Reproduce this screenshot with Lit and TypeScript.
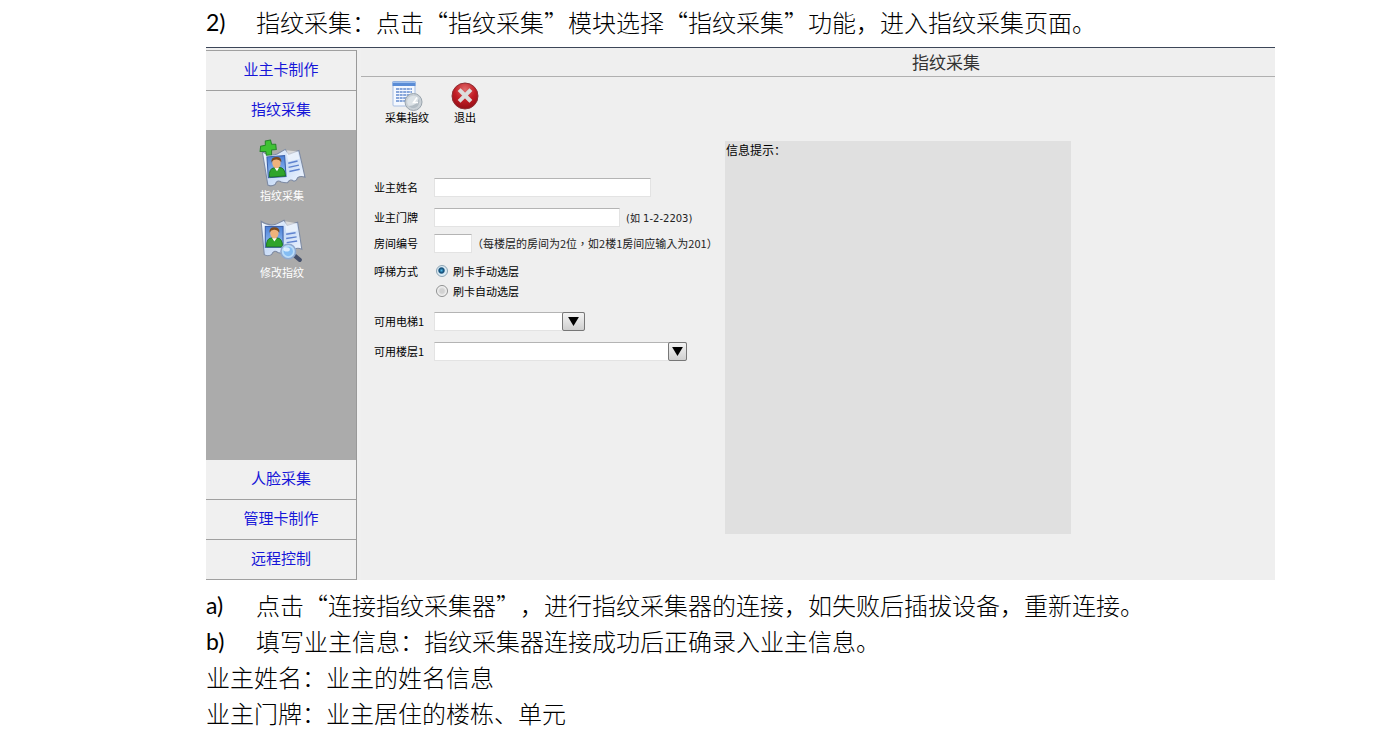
import { LitElement, html, css, svg } from "lit";
import { customElement, state } from "lit/decorators.js";
import { classMap } from "lit/directives/class-map.js";

const badge = svg`
  <path d="M3 11 Q10 16 17 14 L25 10 L28 15 L38 12 Q40 24 42 38 Q38 36 35 38 Q34 41 31 41 Q28 38 25 42 Q22 42 19 41 Q15 38 13 43 Q9 45 6 43 Z"
    fill="url(#card)" stroke="#7d8aa3" stroke-width="1"/>
  <path d="M26 11 L37 13 L38 20 L27 22 Z" fill="#fff" opacity=".55"/>
  <rect x="7" y="16" width="17" height="20" fill="url(#photo)" stroke="#3a5fa8" stroke-width="1"/>
  <path d="M8 35.500 Q8 27 13 27 H18 Q23.500 27 23.500 35.500 Z" fill="#2fa42b" stroke="#156b17" stroke-width=".8"/>
  <path d="M13.500 27 L15.700 30.500 L18 27 Z" fill="#fff"/>
  <ellipse cx="15.700" cy="22.500" rx="4" ry="5" fill="#efb27b"/>
  <path d="M11 22 Q10.500 16.500 15.700 16.700 Q21 16.500 20.500 22 Q18.500 19 15.700 19.200 Q12.500 19 11 22 Z" fill="#7b4a1e"/>
  <path d="M27 23.500 L36 22 M27 27.500 L37 26 M27.500 31.500 L37.500 30" stroke="#5f83cf" stroke-width="1.400" fill="none"/>`;

const defs = svg`
  <defs>
    <linearGradient id="card" x1="0" y1="0" x2="1" y2="1">
      <stop offset="0" stop-color="#f6faff"/><stop offset=".5" stop-color="#c9dcf7"/><stop offset="1" stop-color="#f4f8ff"/>
    </linearGradient>
    <linearGradient id="photo" x1="0" y1="0" x2="0" y2="1">
      <stop offset="0" stop-color="#4a80d8"/><stop offset="1" stop-color="#9cc4f2"/>
    </linearGradient>
  </defs>`;

const addIcon = html`<svg class="side-icon" viewBox="0 0 46 46" aria-hidden="true">
  ${defs}
  <g transform="translate(2 0) rotate(-4 23 23)">${badge}</g>
  <path d="M7 2 L12 1 L13 5 L17 5 L17.500 10 L13 10.500 L13 15 L8 15.500 L7.500 12 L2 12 L2.500 7 L7 6 Z" fill="#3fc234" stroke="#27842a" stroke-width="1" stroke-linejoin="round"/>
</svg>`;

const editIcon = html`<svg class="side-icon" viewBox="0 0 46 46" aria-hidden="true">
  ${defs}
  <g transform="translate(0 -6)">${badge}</g>
  <path d="M34 37 L40 42" stroke="#45506a" stroke-width="4" stroke-linecap="round"/>
  <circle cx="29" cy="34" r="7" fill="#b9dcfa" stroke="#8fa9cf" stroke-width="1.500"/>
  <circle cx="29" cy="34" r="4.500" fill="#73b3f0" opacity=".75"/>
  <ellipse cx="27.500" cy="32" rx="3" ry="2" fill="#fff" opacity=".7"/>
</svg>`;

const captureIcon = html`<svg class="tool-icon" viewBox="0 0 32 32" aria-hidden="true">
  <rect x="2" y="2" width="22" height="24" rx="1" fill="#f4f8ff" stroke="#a9bfe2"/>
  <path d="M1.500 1.500 H24.500 V6 H1.500 Z" fill="#5a8cd6"/>
  <path d="M2 2.500 H24" stroke="#9fc0ee"/>
  <path d="M5 9 H21 M5 12 H21 M5 15 H21 M5 18 H17 M5 21 H15" stroke="#87a6da" stroke-width="1.800" stroke-dasharray="3 .6"/>
  <circle cx="22.500" cy="22" r="8.500" fill="#c9d0d6" stroke="#9aa5ae"/>
  <circle cx="22.500" cy="22" r="6.300" fill="#dde3e7"/>
  <path d="M17.500 26 Q26 26 28 18 Q30 24 25.500 27.500 Q21 29.500 17.500 26" fill="#b3bdc5"/>
  <path d="M26 17.500 L22.500 22.500 H27" fill="none" stroke="#fff" stroke-width="1.500"/>
</svg>`;

const exitIcon = html`<svg class="tool-icon" viewBox="0 0 32 32" aria-hidden="true">
  <defs>
    <radialGradient id="red" cx=".5" cy=".25" r=".8">
      <stop offset="0" stop-color="#df6b6b"/><stop offset=".5" stop-color="#c21d25"/><stop offset="1" stop-color="#8f0b13"/>
    </radialGradient>
  </defs>
  <circle cx="16" cy="16" r="13" fill="url(#red)" stroke="#8d3035"/>
  <path d="M11.500 11 L20.500 20 M20.500 11 L11.500 20" stroke="#dcdcdc" stroke-width="4" stroke-linecap="square"/>
</svg>`;

const arrow = html`<span class="arrow" aria-hidden="true"
  ><svg viewBox="0 0 12 10"><path d="M0 0 H12 L6 10 Z" fill="#000" /></svg
></span>`;

@customElement("app-root")
export class AppRoot extends LitElement {
  @state() private openGroup = "指纹采集";

  static styles = css`
    :host {
      display: block;
      box-sizing: border-box;
      padding: 4px 99px 8px 206px;
      background: #fff;
      color: #000;
      font-family: "Noto Sans CJK SC", sans-serif;
      font-size: 11px;
      text-spacing-trim: space-all;
    }
    * { box-sizing: border-box; }
    button, input, select { font: inherit; color: inherit; margin: 0; }
    button { border: 0; padding: 0; background: none; cursor: pointer; }
    .step {
      display: flex;
      margin: 0;
      font-size: 24px;
      line-height: 36px;
      font-weight: 300;
      color: #000;
    }
    .marker { flex: none; width: 50px; font-family: Lato, sans-serif; font-weight: 400; font-size: 23px; }
    .notes { margin-top: 7px; }
    .window {
      display: flex;
      margin-top: 7px;
      border-top: 1px solid #3c4658;
      background: #f0f0f0;
    }
    .side {
      display: flex;
      flex-direction: column;
      flex: none;
      width: 151px;
      min-height: 530px;
      margin-top: 2px;
      border-top: 1px solid #a0a0a0;
      border-right: 1px solid #999;
    }
    .group {
      flex: none;
      height: 40px;
      padding-bottom: 3px;
      border-bottom: 1px solid #a0a0a0;
      color: #1616d8;
      font-size: 15px;
      line-height: 36px;
    }
    .group.open { border-bottom-color: #ababab; }
    .panel {
      flex: 1;
      display: flex;
      flex-direction: column;
      align-items: center;
      gap: 13px;
      padding-top: 8px;
      background: #ababab;
    }
    .entry { display: grid; justify-items: center; color: #fff; line-height: 16px; padding-left: 2px; }
    .side-icon { width: 48px; height: 48px; display: block; }
    .main { flex: 1; min-width: 0; margin-left: 4px; background: #efefef; }
    .title {
      margin: 0;
      padding-left: 256px;
      border-bottom: 1px solid #b0b0b0;
      text-align: center;
      font-size: 17px;
      font-weight: 400;
      line-height: 28px;
      color: #333;
    }
    .tools { display: flex; gap: 12px; height: 64px; padding: 3px 23px 0; align-items: flex-start; }
    .tool { display: grid; justify-items: center; min-width: 46px; line-height: 10px; }
    .tool-icon { width: 32px; height: 32px; display: block; }
    .body { display: grid; grid-template-columns: 364px minmax(0, 346px); }
    .form { padding: 36px 0 0 13px; white-space: nowrap; }
    .row { display: flex; align-items: center; min-height: 20px; margin-bottom: 10px; }
    .row.near { margin-bottom: 6px; }
    .row.last { margin-bottom: 8px; }
    .label { flex: none; width: 60px; line-height: 16px; }
    .field {
      height: 19px;
      padding: 0 4px;
      border: 1px solid #e3e3e3;
      border-top-color: #b4b4b4;
      border-radius: 0;
      background: #fff;
      outline: none;
    }
    .name { width: 217px; }
    .door { width: 186px; }
    .room { width: 38px; }
    .hint { margin-left: 6px; font-size: 11px; color: #222; }
    .hint.tw { margin-left: 0; font-family: "Noto Sans CJK TC", sans-serif; }
    .hint.latin { font-family: "DejaVu Sans", "Noto Sans CJK SC", sans-serif; font-size: 10px; }
    .options { display: flex; border: 0; margin: 0 0 10px; padding: 0; min-width: 0; }
    .options .label { line-height: 20px; }
    .choice { display: flex; align-items: center; height: 20px; gap: 5px; padding-left: 2px; }
    .radio {
      appearance: none;
      width: 12px;
      height: 12px;
      border: 1px solid #8e8f8f;
      border-radius: 50%;
      background: radial-gradient(circle, #d2d2d2 30%, #f8f8f8 70%);
    }
    .radio:checked {
      border-color: #8ba3b3;
      background: radial-gradient(circle at 45% 45%, #4fb6e4 0, #15517c 28%, #15517c 34%, #dcebf4 48%);
    }
    .combo { position: relative; display: flex; height: 19px; }
    .combo .field { appearance: none; width: 100%; }
    .lift { width: 151px; }
    .floor { width: 253px; }
    .arrow {
      position: absolute;
      top: 0;
      right: 0;
      bottom: 0;
      display: grid;
      place-items: center;
      width: 23px;
      border: 1px solid #777;
      border-radius: 2px;
      background: linear-gradient(#f4f4f4, #cfcfcf);
      pointer-events: none;
    }
    .floor .arrow { width: 19px; }
    .arrow svg { width: 11px; height: 9px; display: block; }
    .info {
      min-height: 393px;
      padding: 0 1px;
      background: #e0e0e0;
      font-size: 12px;
      line-height: 18px;
    }
  `;

  private group(name: string) {
    const open = this.openGroup === name;
    return html`<button
        class=${classMap({ group: true, open })}
        aria-expanded=${open}
        @click=${() => (this.openGroup = name)}
      >${name}</button>
      ${open
        ? html`<div class="panel">
            <button class="entry">${addIcon}指纹采集</button>
            <button class="entry">${editIcon}修改指纹</button>
          </div>`
        : null}`;
  }

  render() {
    return html`
      <p class="step"><span class="marker">2)</span><span>指纹采集：点击“指纹采集”模块选择“指纹采集”功能，进入指纹采集页面。</span></p>
      <section class="window">
        <nav class="side">
          ${["业主卡制作", "指纹采集", "人脸采集", "管理卡制作", "远程控制"].map((n) => this.group(n))}
        </nav>
        <div class="main">
          <h1 class="title">指纹采集</h1>
          <div class="tools">
            <button class="tool">${captureIcon}采集指纹</button>
            <button class="tool">${exitIcon}退出</button>
          </div>
          <div class="body">
            <form class="form" @submit=${(e: Event) => e.preventDefault()}>
              <div class="row">
                <label class="label" for="name">业主姓名</label>
                <input class="field name" id="name" type="text" />
              </div>
              <div class="row near">
                <label class="label" for="door">业主门牌</label>
                <input class="field door" id="door" type="text" />
                <span class="hint latin">(如 1-2-2203)</span>
              </div>
              <div class="row last">
                <label class="label" for="room">房间编号</label>
                <input class="field room" id="room" type="text" />
                <span class="hint tw">（每楼层的房间为2位，如2楼1房间应输入为201）</span>
              </div>
              <div class="options" role="radiogroup" aria-labelledby="mode">
                <span class="label" id="mode">呼梯方式</span>
                <div>
                  <label class="choice"><input class="radio" type="radio" name="mode" checked />刷卡手动选层</label>
                  <label class="choice"><input class="radio" type="radio" name="mode" />刷卡自动选层</label>
                </div>
              </div>
              <div class="row">
                <label class="label" for="lift">可用电梯1</label>
                <span class="combo lift"><select class="field" id="lift"><option></option></select>${arrow}</span>
              </div>
              <div class="row">
                <label class="label" for="floor">可用楼层1</label>
                <span class="combo floor"><select class="field" id="floor"><option></option></select>${arrow}</span>
              </div>
            </form>
            <aside class="info">信息提示：</aside>
          </div>
        </div>
      </section>
      <div class="notes">
        <p class="step"><span class="marker">a)</span><span>点击“连接指纹采集器”，进行指纹采集器的连接，如失败后插拔设备，重新连接。</span></p>
        <p class="step"><span class="marker">b)</span><span>填写业主信息：指纹采集器连接成功后正确录入业主信息。</span></p>
        <p class="step">业主姓名：业主的姓名信息</p>
        <p class="step">业主门牌：业主居住的楼栋、单元</p>
      </div>
    `;
  }
}
